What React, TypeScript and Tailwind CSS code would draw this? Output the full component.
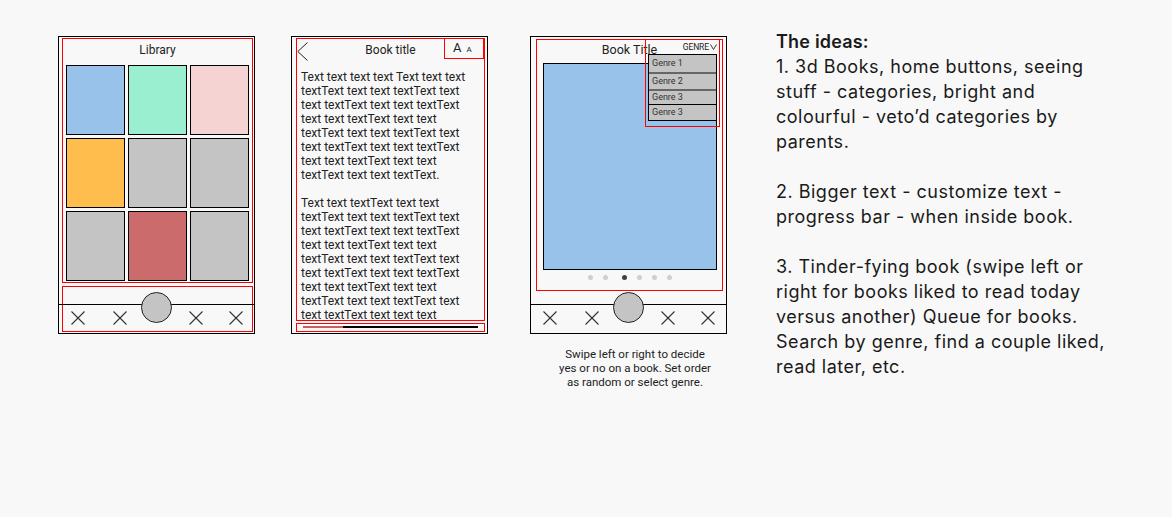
import React from 'react';

const tiles = ['#99c2ea', '#9befd1', '#f5d3d3', '#ffbd4d', '#c4c4c4', '#c4c4c4', '#c4c4c4', '#cc6b6b', '#c4c4c4'];

const para1 = [
  'Text text text text Text text text',
  'textText text text textText text',
  'text textText text text textText',
  'text text textText text text',
  'textText text text textText text',
  'text textText text text textText',
  'text text textText text text',
  'textText text text textText.',
];

const para2 = [
  'Text text textText text text',
  'textText text text textText text',
  'text textText text text textText',
  'text text textText text text',
  'textText text text textText text',
  'text textText text text textText',
  'text text textText text text',
  'textText text text textText text',
  'text textText text text text',
];

function XIcon() {
  return (
    <svg width="14" height="14" viewBox="0 0 14 14" className="shrink-0">
      <line x1="0.5" y1="0.5" x2="13.5" y2="13.5" stroke="#333" strokeWidth="1.1" />
      <line x1="13.5" y1="0.5" x2="0.5" y2="13.5" stroke="#333" strokeWidth="1.1" />
    </svg>
  );
}

// home bar: line across the phone, round button sitting on it
function NavRow({ className = '' }: { className?: string }) {
  return (
    <div className={`flex items-start border-t border-black pl-[12px] ${className}`}>
      <div className="mt-[6px]"><XIcon /></div>
      <div className="mt-[6px] ml-[28px]"><XIcon /></div>
      <div className="-mt-[13px] ml-[14px] w-[31px] h-[31px] rounded-full border border-[#222] bg-[#c4c4c4] shrink-0" />
      <div className="mt-[6px] ml-[17px]"><XIcon /></div>
      <div className="mt-[6px] ml-[26px]"><XIcon /></div>
    </div>
  );
}

function LibraryPhone() {
  return (
    <div className="w-[197px] h-[298px] border border-black flex flex-col shrink-0">
      <div className="ml-[3px] mt-[1px] w-[191px] h-[245px] border border-[#ff0000] flex flex-col">
        <div className="mt-[4px] text-center text-[12px] leading-[14px] text-[#222]">Library</div>
        <div className="mt-[8px] ml-[3px] grid grid-cols-[59px_59px_59px] gap-[3px]">
          {tiles.map((c, i) => (
            <div key={i} className="h-[70px] border border-black" style={{ backgroundColor: c }} />
          ))}
        </div>
      </div>
      <div className="ml-[3px] mt-[3px] w-[191px] h-[46px] border border-[#ff0000]">
        <NavRow className="mt-[17px] -ml-[4px] w-[195px]" />
      </div>
    </div>
  );
}

function ReaderPhone() {
  return (
    <div className="ml-[36px] w-[197px] h-[298px] border border-black flex flex-col shrink-0">
      <div className="ml-[4px] mt-[1px] w-[189px] h-[283px] border border-[#ff0000] flex flex-col overflow-hidden">
        <div className="grid grid-cols-[1fr_auto_1fr] items-start h-[20px]">
          <svg width="12" height="20" viewBox="0 0 12 20" className="mt-[3px]">
            <polyline points="10.5,0.5 0.8,9.5 10.5,18.5" fill="none" stroke="#222" strokeWidth="1" />
          </svg>
          <div className="mt-[4px] text-[12px] leading-[14px] text-[#222]">Book title</div>
          <div className="justify-self-end -mt-[1px] w-[40px] h-[21px] border border-[#ff0000] flex items-baseline pl-[8px] pt-[1px] text-[#222]">
            <span className="text-[13px] leading-[15px]">A</span>
            <span className="ml-[5px] text-[8px] leading-[15px]">A</span>
          </div>
        </div>
        <div className="mt-[11px] pl-[4px] text-[12px] leading-[14px] text-[#222] whitespace-nowrap">
          {para1.map((l, i) => <div key={i}>{l}</div>)}
          <div className="h-[14px]" />
          {para2.map((l, i) => <div key={i}>{l}</div>)}
        </div>
      </div>
      <div className="ml-[4px] mt-[2px] w-[189px] h-[9px] border border-[#ff0000] pt-[2px] pl-[6px]">
        <div className="flex w-[175px] h-[2px]">
          <div className="w-[40px] bg-[#c86060]" />
          <div className="flex-1 bg-black" />
        </div>
      </div>
    </div>
  );
}

function GenreMenu() {
  const items = ['Genre 1', 'Genre 2', 'Genre 3', 'Genre 3'];
  return (
    <div className="absolute left-[108px] -top-[1px] w-[75px] h-[88px] border border-[#ff0000] flex flex-col">
      <div className="h-[14px] flex items-center justify-end pr-[2px] text-[8.5px] text-[#222]">
        <span className="tracking-[-0.1px]">GENRE</span>
        <svg width="7" height="6" viewBox="0 0 7 6" className="ml-[1px]">
          <polyline points="0.5,0.5 3.5,5.5 6.5,0.5" fill="none" stroke="#222" strokeWidth="0.9" />
        </svg>
      </div>
      <div className="ml-[2px] w-[69px] border border-black bg-[#c4c4c4] text-[9px] text-[#333] flex flex-col">
        <div className="h-[17px] pl-[3px] flex items-center">{items[0]}</div>
        <div className="h-[2px] bg-[#666]" />
        <div className="h-[15px] pl-[3px] flex items-center">{items[1]}</div>
        <div className="h-[2px] bg-[#666]" />
        <div className="h-[13px] pl-[3px] flex items-end">{items[2]}</div>
        <div className="h-[1px] bg-black" />
        <div className="h-[15px] pl-[3px] flex items-center">{items[3]}</div>
      </div>
    </div>
  );
}

function SwipePhone() {
  const dots = [0, 1, 2, 3, 4, 5];
  return (
    <div className="ml-[42px] w-[197px] flex flex-col shrink-0">
      <div className="w-[197px] h-[298px] border border-black flex flex-col">
        <div className="relative ml-[5px] mt-[2px] w-[187px] h-[252px] border border-[#ff0000] flex flex-col">
          <div className="mt-[3px] text-center text-[12.5px] leading-[14px] text-[#222]">Book Title</div>
          <div className="mt-[6px] ml-[6px] w-[174px] h-[207px] border border-black bg-[#98c2ea]" />
          <div className="mt-[5px] flex justify-center">
            {dots.map((d) => (
              <div
                key={d}
                className={`w-[5px] h-[5px] rounded-full ${d === 2 ? 'bg-[#4d3b3b]' : 'bg-[#cfcfcf]'} ${d === 0 ? '' : d === 2 ? 'ml-[14px]' : 'ml-[10px]'}`}
              />
            ))}
          </div>
          <GenreMenu />
        </div>
        <NavRow className="mt-[13px]" />
      </div>
      <div className="mt-[13px] pl-[13px] text-center text-[11.5px] leading-[14px] text-[#222] whitespace-nowrap">
        <div>Swipe left or right to decide</div>
        <div>yes or no on a book. Set order</div>
        <div>as random or select genre.</div>
      </div>
    </div>
  );
}

export default function App() {
  const lines: (string | null)[] = [
    '1. 3d Books, home buttons, seeing',
    'stuff - categories, bright and',
    'colourful - veto\u2019d categories by',
    'parents.',
    null,
    '2. Bigger text - customize text -',
    'progress bar - when inside book.',
    null,
    '3. Tinder-fying book (swipe left or',
    'right for books liked to read today',
    'versus another) Queue for books.',
    'Search by genre, find a couple liked,',
    'read later, etc.',
  ];
  return (
    <div className="w-[1172px] h-[517px] bg-[#f8f8f8] flex items-start pl-[58px] pt-[30px] overflow-hidden">
      <div className="mt-[6px] flex items-start font-[Roboto,sans-serif]">
        <LibraryPhone />
        <ReaderPhone />
        <SwipePhone />
      </div>
      <div className="ml-[49px] -mt-[1px] font-[Inter,sans-serif] text-[18px] leading-[25px] tracking-[0.5px] text-[#1a1a1a] whitespace-nowrap">
        <div className="font-semibold tracking-[0.2px]">The ideas:</div>
        {lines.map((l, i) => (l === null ? <div key={i} className="h-[25px]" /> : <div key={i}>{l}</div>))}
      </div>
    </div>
  );
}
